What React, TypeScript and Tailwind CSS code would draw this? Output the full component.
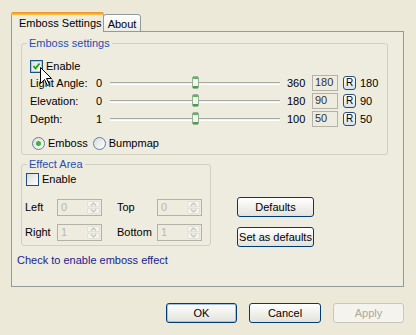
import React from "react";

const PANEL = "bg-[#EEEBDF]";

const CheckBox = ({ checked, hover }: { checked?: boolean; hover?: boolean }) => (
  <div
    className={`relative w-[13px] h-[13px] shrink-0 border border-[#1C5180] bg-linear-to-br from-[#DCDCD7] to-white ${
      hover ? "shadow-[inset_0_0_0_1px_#E9C45E]" : ""
    }`}
  >
    {checked && (
      <svg width="11" height="11" viewBox="0 0 11 11" className="absolute left-0 top-0">
        <path d="M2.5 5 L4.5 7.5 L8.5 2.5" fill="none" stroke="#21A121" strokeWidth="2" />
      </svg>
    )}
  </div>
);

const Radio = ({ checked }: { checked?: boolean }) => (
  <div className="flex items-center justify-center w-[13px] h-[13px] shrink-0 rounded-full border border-[#5F7F9F] bg-linear-to-br from-[#DCDCD7] to-white">
    {checked && <div className="w-[5px] h-[5px] rounded-full bg-[#3DB43D]" />}
  </div>
);

const Slider = () => (
  <div className="relative w-[174px] h-[18px] px-[2px] flex items-center">
    <div className="w-full h-[3px] border-t border-[#A9A89E] bg-[#F2F1EA] border-b border-b-white" />
    <div className="absolute left-[84px] top-[2px] w-[7px] h-[13px] rounded-[2px] border border-[#98AE98] bg-[#F5F5EF] flex flex-col justify-between">
      <div className="h-[2px] bg-[#55BD55]" />
      <div className="h-[2px] bg-[#3DA93D]" />
    </div>
  </div>
);

const SliderRow = ({ label, min, max, value }: { label: string; min: string; max: string; value: string }) => (
  <div className="flex items-center h-[18px]">
    <div className="w-[66px]">{label}</div>
    <div className="w-[12px]">{min}</div>
    <Slider />
    <div className="ml-[5px] w-[25px]">{max}</div>
    <div className="w-[26px] h-[16px] border border-[#B3B2A8] pl-[2px] leading-[13px] text-[#333]">{value}</div>
    <div className="ml-[5px] w-[13px] h-[14px] rounded-[3px] border border-[#2B4D7E] bg-linear-to-b from-white to-[#D6E2EE] flex items-center justify-center text-[10px] leading-none">
      R
    </div>
    <div className="ml-[4px]">{value}</div>
  </div>
);

const Spin = ({ value }: { value: string }) => (
  <div className="flex w-[45px] h-[17px] border border-[#B3B2A8]">
    <div className="flex-1 pl-[3px] leading-[14px] text-[#B9B7AA]">{value}</div>
    <div className="w-[15px] flex flex-col gap-px p-px">
      <div className="flex-1 flex items-center justify-center rounded-[1px] bg-[#F4F3EE] border border-[#E2E1D8]">
        <svg width="7" height="4" viewBox="0 0 7 4">
          <path d="M1 3.5 L3.5 1 L6 3.5" fill="none" stroke="#C3C2B6" strokeWidth="1.2" />
        </svg>
      </div>
      <div className="flex-1 flex items-center justify-center rounded-[1px] bg-[#F4F3EE] border border-[#E2E1D8]">
        <svg width="7" height="4" viewBox="0 0 7 4">
          <path d="M1 0.5 L3.5 3 L6 0.5" fill="none" stroke="#C3C2B6" strokeWidth="1.2" />
        </svg>
      </div>
    </div>
  </div>
);

const Button = ({ children, className = "", primary, disabled }: { children: React.ReactNode; className?: string; primary?: boolean; disabled?: boolean }) => (
  <div
    className={`flex items-center justify-center h-[20px] rounded-[3px] border ${
      disabled
        ? "border-[#C9C7BA] bg-[#F4F3EE] text-[#ACA899]"
        : "border-[#003C74] bg-linear-to-b from-white to-[#E3E2DA] text-black"
    } ${primary ? "shadow-[inset_0_0_0_1px_#A6C0EC]" : ""} ${className}`}
  >
    {children}
  </div>
);

const GroupTitle = ({ children }: { children: React.ReactNode }) => (
  <div className={`-mt-[7px] ml-[5px] w-fit px-[2px] ${PANEL} text-[#1F4FB0] leading-[13px]`}>{children}</div>
);

export default function App() {
  return (
    <div className="relative w-[416px] h-[335px] overflow-hidden bg-[#ECE9D8] pt-[12px] pl-[11px] font-['Liberation_Sans',Arial,sans-serif] text-[11px] leading-[13px] text-black">
      <div className="flex items-end h-[20px]">
        <div className={`relative z-10 w-[93px] h-[20px] rounded-t-[3px] border-x border-[#919B9C] ${PANEL} flex flex-col`}>
          <div className="h-[3px] rounded-t-[3px] bg-linear-to-b from-[#E68B2C] to-[#FFC73C] -mx-px" />
          <div className="flex-1 flex items-center pl-[7px] pb-[1px]">Emboss Settings</div>
        </div>
        <div className="w-[38px] h-[18px] -ml-px rounded-t-[3px] border border-[#919B9C] bg-linear-to-b from-white to-[#ECEBE6] flex items-center justify-center pt-[2px]">
          About
        </div>
      </div>

      <div className={`-mt-px w-[393px] h-[256px] border border-[#919B9C] ${PANEL} pt-[11px]`}>
        <div className="ml-[9px] w-[367px] h-[112px] rounded-[3px] border border-[#D0D0BF]">
          <GroupTitle>Emboss settings</GroupTitle>
          <div className="pl-[8px]">
            <div className="mt-[9px] flex items-center gap-[3px] h-[14px]">
              <CheckBox checked hover />
              <span>Enable</span>
            </div>
            <div className="mt-[1px]">
              <SliderRow label="Light Angle:" min="0" max="360" value="180" />
              <SliderRow label="Elevation:" min="0" max="180" value="90" />
              <SliderRow label="Depth:" min="1" max="100" value="50" />
            </div>
            <div className="mt-[7px] flex items-center h-[16px]">
              <div className="ml-[2px]"><Radio checked /></div>
              <span className="ml-[3px]">Emboss</span>
              <div className="ml-[5px]"><Radio /></div>
              <span className="ml-[3px]">Bumpmap</span>
            </div>
          </div>
        </div>

        <div className="mt-[9px] flex">
          <div className="ml-[9px] w-[190px] h-[82px] rounded-[3px] border border-[#D0D0BF]">
            <GroupTitle>Effect Area</GroupTitle>
            <div className="mt-[1px] pl-[4px] flex items-center gap-[3px] h-[14px]">
              <CheckBox />
              <span>Enable</span>
            </div>
            <div className="mt-[13px] pl-[3px] flex items-center h-[17px]">
              <div className="w-[32px]">Left</div>
              <Spin value="0" />
              <div className="ml-[15px] w-[40px]">Top</div>
              <Spin value="0" />
            </div>
            <div className="mt-[8px] pl-[3px] flex items-center h-[17px]">
              <div className="w-[32px]">Right</div>
              <Spin value="1" />
              <div className="ml-[15px] w-[40px]">Bottom</div>
              <Spin value="1" />
            </div>
          </div>
          <div className="ml-[26px] mt-[33px] flex flex-col gap-[10px]">
            <Button className="w-[77px]">Defaults</Button>
            <Button className="w-[77px]">Set as defaults</Button>
          </div>
        </div>

        <div className="mt-[7px] ml-[5px] text-[#1C1C8F]">Check to enable emboss effect</div>
      </div>

      <div className="mt-[16px] ml-[155px] flex gap-[12px]">
        <Button className="w-[71px]" primary>OK</Button>
        <Button className="w-[72px]">Cancel</Button>
        <Button className="w-[71px]" disabled>Apply</Button>
      </div>

      <svg className="absolute left-[40px] top-[67px]" width="13" height="20" viewBox="0 0 13 20">
        <path d="M0.5 0.5 L0.5 16.5 L4.5 12.5 L7.5 18.5 L9.5 17.5 L6.5 11.5 L11.5 11.5 Z" fill="white" stroke="black" strokeWidth="1" />
      </svg>
    </div>
  );
}
